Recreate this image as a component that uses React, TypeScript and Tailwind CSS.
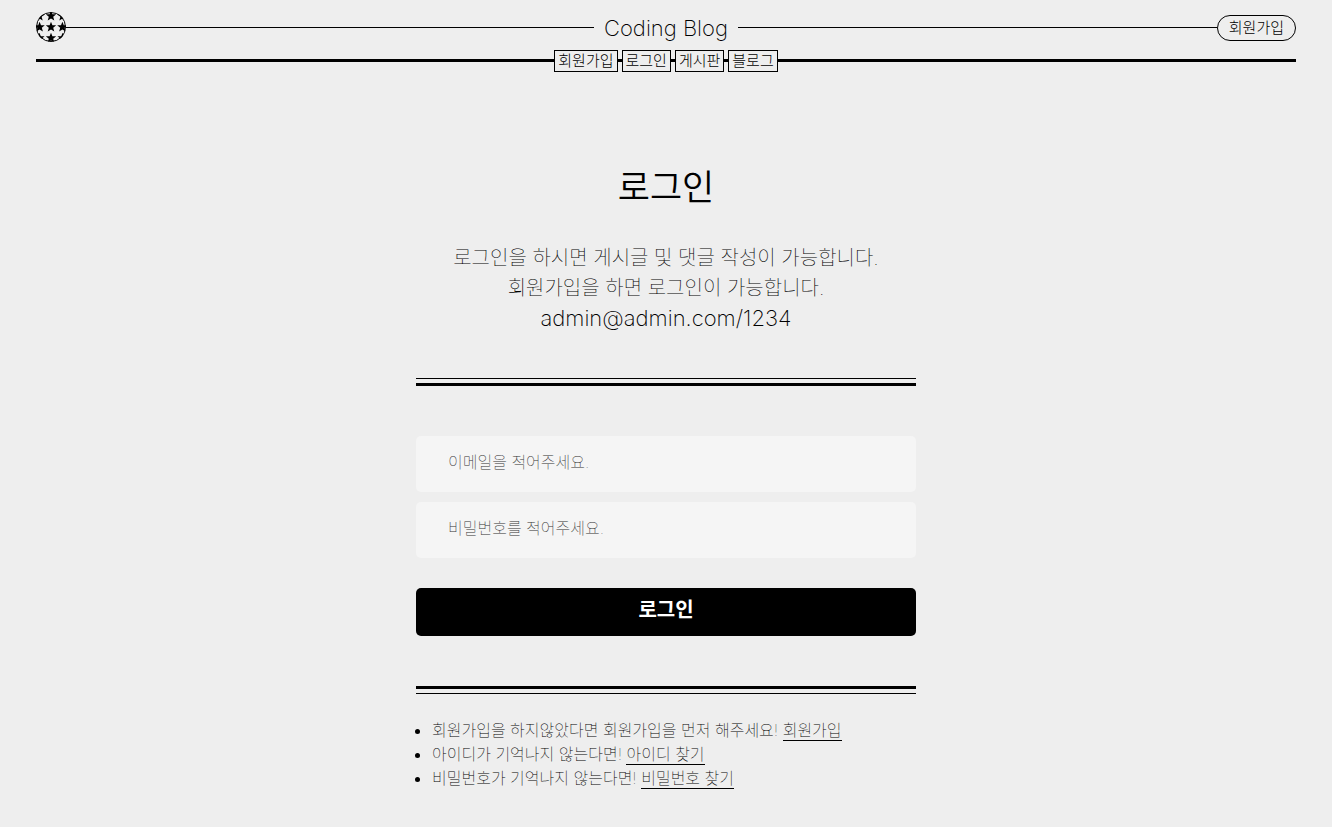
import React from "react";

const navItems = ["회원가입", "로그인", "게시판", "블로그"];

const hints = [
  { text: "회원가입을 하지않았다면 회원가입을 먼저 해주세요!", link: "회원가입" },
  { text: "아이디가 기억나지 않는다면!", link: "아이디 찾기" },
  { text: "비밀번호가 기억나지 않는다면!", link: "비밀번호 찾기" },
];

const star = "M0 -5.2 L1.4 -1.7 L5.2 -1.7 L2.2 0.8 L3.3 4.6 L0 2.4 L-3.3 4.6 L-2.2 0.8 L-5.2 -1.7 L-1.4 -1.7 Z";

const stars = [
  [15, 4], [3.6, 15], [15, 15], [26.4, 15], [15, 26],
  [3.4, 4], [26.6, 4], [3.4, 26], [26.6, 26],
];

function Logo() {
  return (
    <svg viewBox="0 0 30 30" className="size-[30px]" aria-hidden="true">
      <defs>
        <clipPath id="disc">
          <circle cx="15" cy="15" r="15" />
        </clipPath>
      </defs>
      <g clipPath="url(#disc)">
        {stars.map(([x, y]) => (
          <path key={`${x}-${y}`} d={star} transform={`translate(${x} ${y})`} />
        ))}
      </g>
      <circle cx="15" cy="15" r="14.5" fill="none" stroke="#000" strokeWidth="1" />
    </svg>
  );
}

export default function App() {
  return (
    <div className="min-h-screen bg-[#eeeeee] font-['Inter','Noto_Sans_CJK_KR',sans-serif] font-light text-black">
      <header className="px-9 pt-3">
        <div className="flex h-[30px] items-center">
          <div className="flex flex-1 items-center">
            <a href="#" aria-label="Home"><Logo /></a>
            <span className="h-px flex-1 bg-black" />
          </div>
          <h1 className="px-[10px] pt-px text-[22px] leading-[30px] font-extralight"><a href="#">Coding Blog</a></h1>
          <div className="flex h-full flex-1 items-center">
            <span className="h-px flex-1 bg-black" />
            <a href="#" className="mt-0.5 flex h-[26px] items-center rounded-full border border-black px-[11px] text-[15px]">회원가입</a>
          </div>
        </div>
        <nav className="mt-2 flex items-center">
          <span className="mb-px h-[3px] flex-1 bg-black" />
          <ul className="flex items-center">
            {navItems.map((item, i) => (
              <li key={item} className="flex items-center">
                {i > 0 && <span className="mb-px h-[3px] w-1 bg-black" />}
                <a href="#" className="flex h-[22px] items-center border border-black px-[3px] text-[15px]">{item}</a>
              </li>
            ))}
          </ul>
          <span className="mb-px h-[3px] flex-1 bg-black" />
        </nav>
      </header>
      <main className="mx-auto max-w-[500px] pt-[88px] pb-9">
        <h2 className="text-center text-[35px] leading-[54px] font-[350]">로그인</h2>
        <p className="mt-[29px] text-center text-xl leading-[30px] font-thin">
          로그인을 하시면 게시글 및 댓글 작성이 가능합니다.<br />
          회원가입을 하면 로그인이 가능합니다.<br />
          <span className="text-[22px] font-[150]">admin@admin.com/1234</span>
        </p>
        <form className="mt-11 border-t border-black" onSubmit={(e) => e.preventDefault()}>
          <div className="mt-1 border-t-[3px] border-black pt-[50px]">
            <input aria-label="이메일" type="email" placeholder="이메일을 적어주세요." className="block h-14 w-full rounded-[5px] bg-[#f5f5f5] px-8 pb-1 text-base font-thin placeholder:text-[#333]" />
            <input aria-label="비밀번호" type="password" placeholder="비밀번호를 적어주세요." className="mt-[10px] block h-14 w-full rounded-[5px] bg-[#f5f5f5] px-8 pb-1 text-base font-thin placeholder:text-[#333]" />
            <button type="submit" className="mt-[30px] block h-12 w-full rounded-[5px] bg-black pb-1 text-xl font-bold text-white">로그인</button>
          </div>
        </form>
        <div className="mt-[50px] border-t-[3px] border-black">
          <ul className="mt-1 list-disc border-t border-black pt-6 pl-4 text-base font-thin">
            {hints.map((hint) => (
              <li key={hint.link} className="leading-6">
                {hint.text} <a href="#" className="border-b border-black">{hint.link}</a>
              </li>
            ))}
          </ul>
        </div>
      </main>
    </div>
  );
}
